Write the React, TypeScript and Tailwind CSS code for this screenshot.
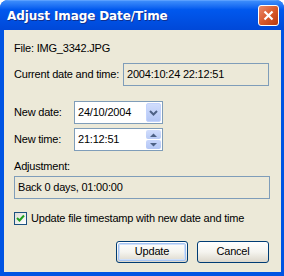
import React from "react";

const font = { fontFamily: '"Liberation Sans", Arial, sans-serif', letterSpacing: "-0.2px" };

function Field({ children, className = "" }: { children: React.ReactNode; className?: string }) {
  return (
    <div
      className={`shrink-0 flex items-center h-[23px] border border-[#7f9db9] px-[3px] text-[11px] text-black whitespace-nowrap ${className}`}
    >
      {children}
    </div>
  );
}

function ChevronDown() {
  return (
    <svg width="9" height="6" viewBox="0 0 9 6">
      <path d="M1 1 L4.5 4.5 L8 1" stroke="#4d6185" strokeWidth="2" fill="none" />
    </svg>
  );
}

function Arrow({ up }: { up?: boolean }) {
  return (
    <svg width="7" height="4" viewBox="0 0 7 4">
      <path d={up ? "M0 4 L3.5 0.5 L7 4 Z" : "M0 0 L3.5 3.5 L7 0 Z"} fill="#4d6185" />
    </svg>
  );
}

function XpButton({ label, def }: { label: string; def?: boolean }) {
  return (
    <div className="w-[72px] h-[22px] rounded-[3px] border border-[#003c74] bg-gradient-to-b from-white via-[#f5f4ef] to-[#dcd7cb] p-[1px]">
      <div
        className={`w-full h-full rounded-[2px] flex items-center justify-center text-[11px] text-black ${
          def ? "border border-[#a6c4f2] shadow-[inset_0_0_0_1px_#cfe0fb]" : ""
        }`}
      >
        {label}
      </div>
    </div>
  );
}

export default function App() {
  return (
    <div className="w-[284px] h-[276px] bg-white" style={font}>
      <div className="w-[284px] h-[276px] flex flex-col rounded-t-[8px] bg-[#0054e3] overflow-hidden">
        {/* title bar */}
        <div className="h-[30px] shrink-0 flex items-center justify-between pl-[7px] pr-[5px] bg-gradient-to-b from-[#3b8cfb] via-[#0058ee] via-30% to-[#0048d8] border-t border-[#5aa0ff]">
          <span
            className="text-white font-bold [text-shadow:1px_1px_#0f2f8f]"
            style={{ fontFamily: '"DejaVu Sans", Verdana, sans-serif', fontSize: 12, letterSpacing: "-0.1px" }}
          >
            Adjust Image Date/Time
          </span>
          <div className="w-[21px] h-[21px] rounded-[3px] border border-white bg-gradient-to-br from-[#ea8a6a] via-[#d95a2c] to-[#b8380e] flex items-center justify-center">
            <svg width="11" height="11" viewBox="0 0 11 11">
              <path d="M1.5 1.5 L9.5 9.5 M9.5 1.5 L1.5 9.5" stroke="white" strokeWidth="2.2" />
            </svg>
          </div>
        </div>

        {/* client */}
        <div className="flex-1 mr-[3px] mb-[4px] ml-[4px] bg-[#ece9d8] pl-[10px] pr-[10px] pt-[12px] text-[11px] text-black whitespace-nowrap">
          <div className="h-[13px] leading-[13px]">File: IMG_3342.JPG</div>

          <div className="mt-[8px] flex items-center">
            <span className="w-[109px] shrink-0">Current date and time:</span>
            <Field className="w-[146px]">2004:10:24 22:12:51</Field>
          </div>

          <div className="mt-[15px] flex items-center">
            <span className="w-[60px] shrink-0">New date:</span>
            <Field className="w-[89px] bg-white pr-[1px]">
              <span className="flex-1">24/10/2004</span>
              <div className="w-[15px] h-[19px] rounded-[2px] bg-gradient-to-b from-[#d1ddfc] to-[#b3c6f5] border border-[#c3d3fd] flex items-center justify-center">
                <ChevronDown />
              </div>
            </Field>
          </div>

          <div className="mt-[4px] flex items-center">
            <span className="w-[60px] shrink-0">New time:</span>
            <Field className="w-[89px] bg-white pr-[1px]">
              <span className="flex-1">21:12:51</span>
              <div className="w-[15px] h-[19px] flex flex-col gap-[1px]">
                <div className="flex-1 rounded-[2px] bg-gradient-to-b from-[#d1ddfc] to-[#b9cbf6] flex items-center justify-center">
                  <Arrow up />
                </div>
                <div className="flex-1 rounded-[2px] bg-gradient-to-b from-[#c8d6fb] to-[#b3c6f5] flex items-center justify-center">
                  <Arrow />
                </div>
              </div>
            </Field>
          </div>

          <div className="mt-[9px] h-[13px] leading-[13px]">Adjustment:</div>
          <Field className="mt-[3px] w-[256px]">Back 0 days, 01:00:00</Field>

          <div className="mt-[11px] flex items-center gap-[4px]">
            <div className="w-[13px] h-[13px] shrink-0 border border-[#1c5180] bg-gradient-to-br from-[#dcdcd7] to-white flex items-center justify-center">
              <svg width="9" height="9" viewBox="0 0 9 9">
                <path d="M1 4 L3.5 6.5 L8 1.5" stroke="#21a121" strokeWidth="2" fill="none" />
              </svg>
            </div>
            <span>Update file timestamp with new date and time</span>
          </div>

          <div className="mt-[14px] flex justify-end gap-[9px] pr-[2px]">
            <XpButton label="Update" def />
            <XpButton label="Cancel" />
          </div>
        </div>
      </div>
    </div>
  );
}
